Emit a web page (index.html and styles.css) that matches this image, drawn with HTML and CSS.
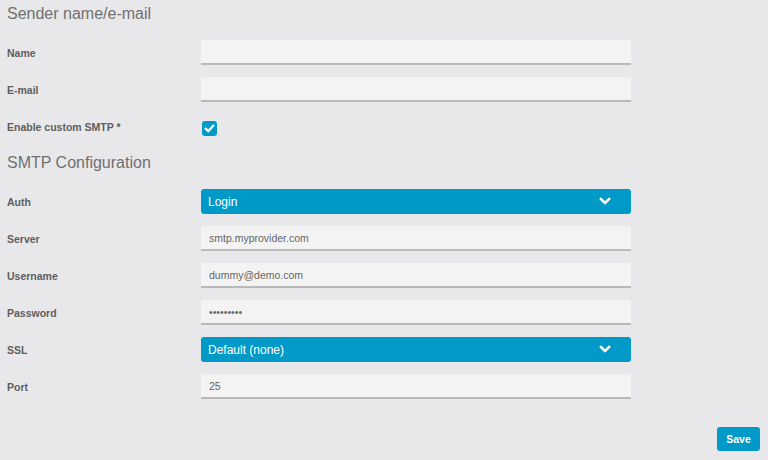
FILE: index.html
```html
<!DOCTYPE html>
<html lang="en">
<head>
    <meta charset="UTF-8">
    <meta name="viewport" content="width=device-width, initial-scale=1.0">
    <title>Mail Settings</title>
    <link rel="stylesheet" href="styles.css">
</head>
<body>
    <form class="settings" id="mailForm">
        <h2 class="section-title first">Sender name/e-mail</h2>

        <div class="form-row">
            <label for="name">Name</label>
            <input type="text" id="name">
        </div>

        <div class="form-row">
            <label for="email">E-mail</label>
            <input type="text" id="email">
        </div>

        <div class="form-row">
            <label for="customSmtp">Enable custom SMTP *</label>
            <span class="checkbox">
                <svg width="15" height="15" viewBox="0 0 15 15">
                    <path d="M3.6 7.6 L6.3 10.2 L11.4 4.6" fill="none" stroke="#fff" stroke-width="2.3" stroke-linecap="round" stroke-linejoin="round"/>
                </svg>
            </span>
        </div>

        <h2 class="section-title">SMTP Configuration</h2>

        <div class="form-row">
            <label for="auth">Auth</label>
            <div class="select-wrap">
                <select id="auth">
                    <option>Login</option>
                    <option>Plain</option>
                    <option>None</option>
                </select>
                <svg class="chevron" width="12" height="9" viewBox="0 0 12 9">
                    <path d="M1.8 1.8 L6 6 L10.2 1.8" fill="none" stroke="#fff" stroke-width="2.6" stroke-linecap="round" stroke-linejoin="round"/>
                </svg>
            </div>
        </div>

        <div class="form-row">
            <label for="server">Server</label>
            <input type="text" id="server" value="smtp.myprovider.com">
        </div>

        <div class="form-row">
            <label for="username">Username</label>
            <input type="text" id="username" value="dummy@demo.com">
        </div>

        <div class="form-row">
            <label for="password">Password</label>
            <input type="password" id="password" value="123456789">
        </div>

        <div class="form-row">
            <label for="ssl">SSL</label>
            <div class="select-wrap">
                <select id="ssl">
                    <option>Default (none)</option>
                    <option>SSL</option>
                    <option>TLS</option>
                </select>
                <svg class="chevron" width="12" height="9" viewBox="0 0 12 9">
                    <path d="M1.8 1.8 L6 6 L10.2 1.8" fill="none" stroke="#fff" stroke-width="2.6" stroke-linecap="round" stroke-linejoin="round"/>
                </svg>
            </div>
        </div>

        <div class="form-row">
            <label for="port">Port</label>
            <input type="text" id="port" value="25">
        </div>

        <div class="actions">
            <button type="submit">Save</button>
        </div>
    </form>
</body>
</html>
```

FILE: styles.css
```css
body {
    margin: 0;
    background-color: #e8e8ea;
    font-family: "Liberation Sans", Arial, sans-serif;
}
.settings {
    margin: 0;
}
.section-title {
    margin: 0 0 15px;
    padding: 2px 7px 0;
    font-size: 16px;
    font-weight: normal;
    line-height: 20px;
    color: #707070;
    border-bottom: 1px solid #e5e5e7;
}
.section-title.first {
    padding-top: 4px;
    margin-bottom: 15px;
}
.form-row {
    display: flex;
    align-items: center;
    height: 25px;
    margin-bottom: 12px;
    padding-left: 7px;
}
.form-row label {
    width: 194px;
    font-size: 10.5px;
    font-weight: bold;
    color: #5e5e5e;
}
.form-row input {
    width: 430px;
    height: 25px;
    box-sizing: border-box;
    padding: 0 8px;
    border: none;
    border-bottom: 2px solid #b9b9b9;
    background-color: #f3f3f3;
    font-family: "Liberation Sans", Arial, sans-serif;
    font-size: 10.5px;
    color: #666;
    outline: none;
}
.checkbox {
    display: flex;
    width: 15px;
    height: 15px;
    margin-left: 1px;
    margin-top: 4px;
    background-color: #0099c8;
    border-radius: 3px;
}
.select-wrap {
    position: relative;
    width: 430px;
    height: 25px;
}
.select-wrap select {
    appearance: none;
    -webkit-appearance: none;
    width: 100%;
    height: 25px;
    padding: 0 7px;
    border: none;
    border-radius: 3px;
    background-color: #0099c8;
    color: #fff;
    font-family: "Liberation Sans", Arial, sans-serif;
    font-size: 12px;
    outline: none;
}
.chevron {
    position: absolute;
    right: 20px;
    top: 8px;
    pointer-events: none;
}
.actions {
    display: flex;
    justify-content: flex-end;
    padding-right: 8px;
    margin-top: 28px;
}
button {
    width: 43px;
    height: 24px;
    border: none;
    border-radius: 3px;
    background-color: #0099c8;
    color: #fff;
    font-family: "Liberation Sans", Arial, sans-serif;
    font-size: 10.5px;
    font-weight: bold;
    cursor: pointer;
}
```
